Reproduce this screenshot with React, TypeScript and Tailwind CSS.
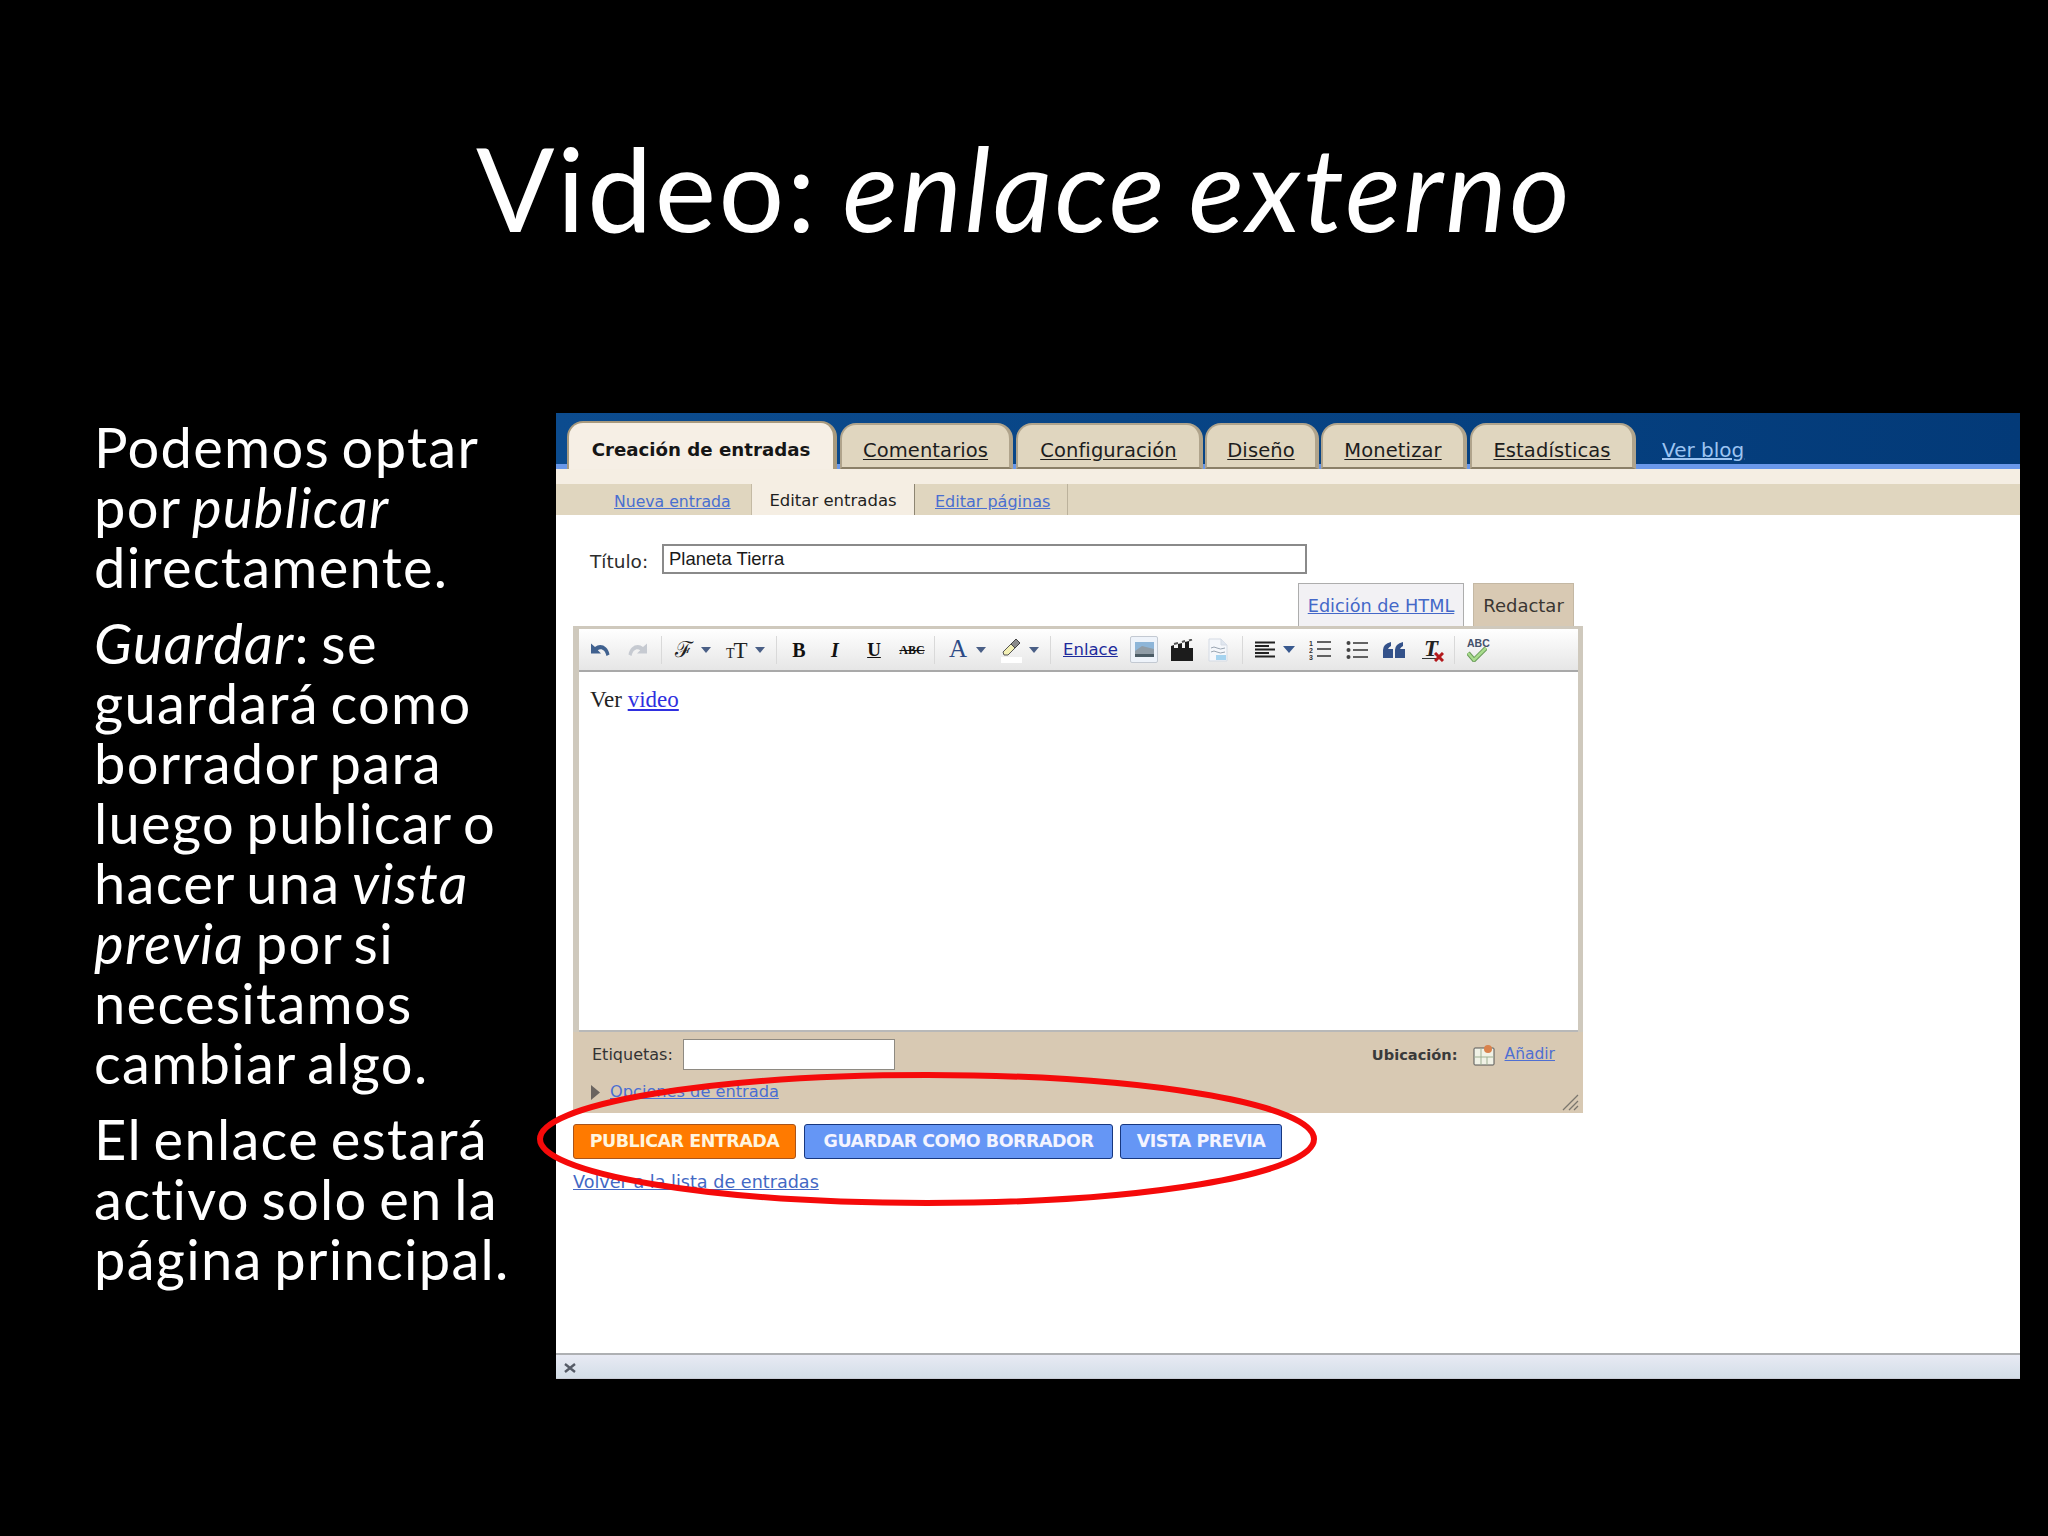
import React from "react";

const ui = "font-['DejaVu_Sans',sans-serif]";

function Tab({ label, active, w, ml }: { label: string; active?: boolean; w: string; ml?: string }) {
  return (
    <div
      className={`${w} ${ml ?? ""} -mb-[5px] rounded-t-[16px] border-t-[2px] border-l-[2px] border-r-[4px] flex items-center justify-center pt-[9px] ${
        active
          ? "h-[48px] bg-[#f6efe5] border-[#a89a7e] border-b-0"
          : "h-[46px] bg-[#e0d6bf] border-[#b0a48c] border-b-[2px] border-b-[#8b8068]"
      }`}
    >
      <span className={`leading-none ${active ? "text-[18.2px] font-bold text-[#161616]" : "text-[19.5px] tracking-[0.1px] underline text-[#1d1d1d] underline-offset-[2px]"}`}>
        {label}
      </span>
    </div>
  );
}

function Caret() {
  return (
    <svg width="10" height="6" viewBox="0 0 10 6" className="shrink-0">
      <path d="M0 0h10L5 6z" fill="#4a5f86" />
    </svg>
  );
}

function Sep({ ml }: { ml: string }) {
  return <div className={`${ml} w-[1px] h-[28px] bg-[#d9d9d9] shrink-0`} />;
}

function Toolbar() {
  return (
    <div className="h-[43px] bg-gradient-to-b from-white to-[#e6e6e6] border-b-[2px] border-[#a9a9a9] flex items-center pl-[11px] shrink-0">
      <svg width="20" height="16" viewBox="0 0 20 16" className="shrink-0">
        <path d="M1 1.500v10h10L7.800 8.300C10.500 6 15 7 16.500 14l3-1.500C18 3.500 10 .5 5 5L1 1.500z" fill="#40618f" />
      </svg>
      <svg width="20" height="16" viewBox="0 0 20 16" className="ml-[18px] shrink-0">
        <path d="M19 1.500v10H9l3.200-3.200C9.500 6 5 7 3.500 14l-3-1.500C2 3.500 10 .5 15 5l4-3.500z" fill="#c6cad1" />
      </svg>
      <Sep ml="ml-[13px]" />
      <span className="ml-[14px] w-[16px] flex justify-center font-['DejaVu_Serif',serif] text-[22px] leading-none text-[#222] shrink-0">ℱ</span>
      <div className="ml-[9px]"><Caret /></div>
      <span className="ml-[15px] w-[22px] font-['Liberation_Serif',serif] leading-none text-[#222] flex items-end shrink-0">
        <span className="text-[14px]">T</span>
        <span className="text-[23px] -ml-[1px] -mb-[1px]">T</span>
      </span>
      <div className="ml-[7px]"><Caret /></div>
      <Sep ml="ml-[11px]" />
      <span className="ml-[15px] w-[14px] flex justify-center font-['Liberation_Serif',serif] font-bold text-[20px] leading-none text-[#111] shrink-0">B</span>
      <span className="ml-[21px] w-[16px] flex justify-center font-['Liberation_Serif',serif] font-bold italic text-[20px] leading-none text-[#111] shrink-0">I</span>
      <span className="ml-[24px] w-[14px] flex justify-center font-['Liberation_Serif',serif] font-bold underline text-[19px] leading-none text-[#111] shrink-0">U</span>
      <span className="ml-[21px] w-[20px] flex justify-center font-['Liberation_Serif',serif] font-bold line-through text-[12px] leading-none text-[#111] shrink-0">ABC</span>
      <Sep ml="ml-[12px]" />
      <span className="ml-[14px] w-[18px] flex justify-center font-['Liberation_Serif',serif] text-[25px] leading-none text-[#2c4a85] -mt-[3px] shrink-0">A</span>
      <div className="ml-[9px]"><Caret /></div>
      <svg width="24" height="26" viewBox="0 0 24 26" className="ml-[14px] shrink-0">
        <path d="M3 15l8-8 4 4-7 7H4z" fill="#f3f0b5" stroke="#555" strokeWidth="1" />
        <path d="M11 7l5-5 4 4-5 5z" fill="#8a8a8a" stroke="#444" strokeWidth="1" />
        <rect x="1" y="20" width="21" height="6" fill="#ffffff" />
      </svg>
      <div className="ml-[5px]"><Caret /></div>
      <Sep ml="ml-[11px]" />
      <span className="ml-[12px] w-[55px] text-[16.5px] leading-none underline text-[#1d2a9c] shrink-0 whitespace-nowrap font-medium pt-[2px]">Enlace</span>
      <div className="ml-[12px] w-[28px] h-[27px] bg-[#eef3fa] border-[1px] border-[#c3c9d2] rounded-[2px] flex items-center justify-center shrink-0">
        <svg width="19" height="15" viewBox="0 0 19 15">
          <rect width="19" height="15" fill="#8db5d8" />
          <path d="M0 9l7-5 12 3v5H0z" fill="#909ca6" />
          <rect y="12" width="19" height="3" fill="#4c5c66" />
        </svg>
      </div>
      <svg width="24" height="22" viewBox="0 0 24 22" className="ml-[12px] shrink-0">
        <rect x="1" y="9" width="22" height="13" fill="#1c1c1c" />
        <path d="M1 7l3-1v3H1zM8 5l4-1v5H8zM15 3l4-1v7h-4z" fill="#1c1c1c" />
        <path d="M4 5l4-1M12 3l3-1M19 1.500l3-1" stroke="#555" strokeWidth="2" />
      </svg>
      <svg width="20" height="24" viewBox="0 0 20 24" className="ml-[14px] shrink-0">
        <path d="M1 1h12l6 6v16H1z" fill="#f4f7fb" stroke="#d5dbe4" />
        <path d="M13 1v6h6" fill="#dfe6ef" stroke="#d5dbe4" />
        <path d="M3 10q3-2 6 0t8 0M3 14q3-2 6 0t8 0" fill="none" stroke="#9aa5b2" />
        <rect x="8" y="17" width="10" height="5" fill="#a5d3ef" />
      </svg>
      <Sep ml="ml-[14px]" />
      <svg width="22" height="18" viewBox="0 0 22 18" className="ml-[12px] shrink-0">
        <path d="M0 1.500h20M0 5h14M0 8.500h20M0 12h14M0 15.500h20" stroke="#222" strokeWidth="1.800" />
      </svg>
      <div className="ml-[6px]"><svg width="12" height="7" viewBox="0 0 12 7"><path d="M0 0h12L6 7z" fill="#39598f" /></svg></div>
      <svg width="22" height="21" viewBox="0 0 22 21" className="ml-[14px] shrink-0">
        <path d="M8 3h14M8 10h14M8 17h14" stroke="#333" strokeWidth="1.600" />
        <text x="0" y="7" fontSize="7" fontFamily="Liberation Sans" fontWeight="700" fill="#333">1</text>
        <text x="0" y="14" fontSize="7" fontFamily="Liberation Sans" fontWeight="700" fill="#333">2</text>
        <text x="0" y="21" fontSize="7" fontFamily="Liberation Sans" fontWeight="700" fill="#333">3</text>
      </svg>
      <svg width="22" height="20" viewBox="0 0 22 20" className="ml-[15px] shrink-0">
        <path d="M7 3h15M7 10h15M7 17h15" stroke="#333" strokeWidth="1.600" />
        <circle cx="2.500" cy="3" r="2" fill="#444" />
        <circle cx="2.500" cy="10" r="2" fill="#444" />
        <circle cx="2.500" cy="17" r="2" fill="#444" />
      </svg>
      <svg width="22" height="16" viewBox="0 0 22 16" className="ml-[15px] shrink-0">
        <path d="M0 16V8Q0 2 8 0v4Q6 5 5 7h5v9zM12 16V8q0-6 8-8v4q-2 1-3 3h5v9z" fill="#34528a" />
      </svg>
      <span className="ml-[17px] w-[22px] h-[24px] relative shrink-0">
        <span className="absolute left-[2px] -top-[1px] font-['Liberation_Serif',serif] italic font-bold text-[23px] leading-none text-[#222]">T</span>
        <span className="absolute left-0 bottom-[3px] w-[14px] h-[1px] bg-[#333]" />
        <svg width="10" height="10" viewBox="0 0 10 10" className="absolute right-0 bottom-0">
          <path d="M1 1l8 8M9 1l-8 8" stroke="#b3191c" strokeWidth="3" />
        </svg>
      </span>
      <Sep ml="ml-[10px]" />
      <span className="ml-[12px] w-[22px] h-[24px] relative shrink-0">
        <span className="absolute left-0 top-0 font-['Liberation_Sans',sans-serif] font-bold text-[10.500px] leading-none text-[#44506b]">ABC</span>
        <svg width="20" height="16" viewBox="0 0 20 16" className="absolute left-0 bottom-0">
          <path d="M1 7l6 7L19 2" fill="none" stroke="#6a9a5a" strokeWidth="4.500" />
          <path d="M1 7l6 7L19 2" fill="none" stroke="#a8dc8c" strokeWidth="2.500" />
        </svg>
      </span>
    </div>
  );
}

export default function App() {
  return (
    <div className="w-[2048px] h-[1536px] bg-black relative overflow-hidden">
      <div className="h-[413px] pt-[113px] text-center text-white font-['Lato',sans-serif] text-[116px] leading-[150px] tracking-[2.500px] [word-spacing:-8px] whitespace-nowrap">
        Video: <em>enlace externo</em>
      </div>
      <div className="flex">
        <div className="w-[556px] pl-[94px] pt-[4px] text-white font-['Lato',sans-serif] text-[56px] leading-[60px] tracking-[1.300px] [word-spacing:-4px] flex flex-col gap-[16px]">
          <p>Podemos optar<br />por <em>publicar</em><br />directamente.</p>
          <p><em>Guardar</em>: se<br />guardará como<br />borrador para<br />luego publicar o<br />hacer una <em>vista</em><br /><em>previa</em> por si<br />necesitamos<br />cambiar algo.</p>
          <p>El enlace estará<br />activo solo en la<br />página principal.</p>
        </div>
        <div className={`w-[1464px] h-[966px] bg-white flex flex-col ${ui}`}>
          <div className="h-[56px] shrink-0 bg-gradient-to-r from-[#0c4c8f] to-[#033a78] border-b-[5px] border-[#6a98ea] flex items-end pl-[11px]">
            <Tab label="Creación de entradas" active w="w-[270px]" />
            <Tab label="Comentarios" w="w-[173px]" ml="ml-[3px]" />
            <Tab label="Configuración" w="w-[187px]" ml="ml-[3px]" />
            <Tab label="Diseño" w="w-[114px]" ml="ml-[2px]" />
            <Tab label="Monetizar" w="w-[146px]" ml="ml-[2px]" />
            <Tab label="Estadísticas" w="w-[166px]" ml="ml-[3px]" />
            <span className="ml-[26px] text-[20px] leading-none underline text-[#9cc4f2] mb-[4px]">Ver blog</span>
          </div>
          <div className="h-[15px] bg-[#f5eee3] shrink-0" />
          <div className="h-[31px] bg-[#e0d6bf] flex items-stretch text-[16px] shrink-0">
            <span className="ml-[58px] w-[137px] flex items-center underline text-[#4a6fd0] text-[15.700px] pt-[4px]">Nueva entrada</span>
            <span className="w-[164px] bg-[#f5eee3] border-r-[1px] border-[#8d8572] border-l-[1px] border-l-[#c4baa4] flex items-center justify-center text-[#1f1f1f] text-[16.500px] pt-[4px]">Editar entradas</span>
            <span className="w-[153px] border-r-[1px] border-[#bcb29c] flex items-center pl-[20px] underline text-[#4a6fd0] pt-[4px]">Editar páginas</span>
          </div>
          <div className="mt-[29px] ml-[34px] h-[30px] flex items-center shrink-0">
            <span className="w-[72px] text-[18.500px] text-[#2c2c2c] pt-[5px]">Título:</span>
            <div className="w-[645px] h-[30px] border-[2px] border-[#8a8a8a] bg-white pl-[5px] font-['Liberation_Sans',sans-serif] text-[18.500px] leading-[26px] text-[#1a1a1a]">Planeta Tierra</div>
          </div>
          <div className="mt-[9px] ml-[17px] w-[1010px] pr-[9px] h-[43px] flex justify-end items-stretch text-[17.700px] shrink-0">
            <span className="w-[166px] bg-[#f2f1f4] border-[1px] border-b-0 border-[#adadad] flex items-center justify-center underline text-[#4468c8] pt-[2px]">Edición de HTML</span>
            <span className="ml-[9px] w-[101px] bg-[#d8c9b3] border-[1px] border-b-0 border-[#c4b8a4] flex items-center justify-center text-[#3a3632] text-[18px]">Redactar</span>
          </div>
          <div className="ml-[17px] w-[1010px] h-[487px] bg-[#d8c9b3] relative flex flex-col shrink-0">
            <div className="h-[406px] border-t-[3px] border-l-[6px] border-r-[5px] border-[#cfc9bd] flex flex-col shrink-0">
              <Toolbar />
              <div className="flex-1 bg-white border-b-[2px] border-[#b8b8b8] pl-[11px] pt-[15px] font-['Liberation_Serif',serif] text-[23px] leading-[26px] text-[#222]">
                Ver <span className="underline text-[#2f2fe0]">video</span>
              </div>
            </div>
            <div className="mt-[7px] pl-[19px] pr-[28px] h-[31px] flex items-center text-[15.500px] shrink-0">
              <span className="w-[91px] text-[#333] text-[16px] font-medium">Etiquetas:</span>
              <div className="w-[212px] h-[31px] bg-white border-[1px] border-[#8e8a82]" />
              <span className="ml-auto font-bold text-[#3a3a3a] text-[14.600px]">Ubicación:</span>
              <svg width="22" height="22" viewBox="0 0 22 22" className="ml-[15px]">
                <rect x="1" y="4" width="20" height="17" rx="1" fill="#f1f2e6" stroke="#555" />
                <path d="M1 13h20M8 4v17M14 13v8" stroke="#9fb093" />
                <circle cx="15" cy="5" r="4" fill="#d9824c" />
              </svg>
              <span className="ml-[10px] underline text-[#4f6fd2]">Añadir</span>
            </div>
            <div className="mt-[10px] pl-[18px] h-[24px] flex items-center text-[16.200px] shrink-0">
              <svg width="9" height="15" viewBox="0 0 9 15"><path d="M0 0l9 7.500L0 15z" fill="#6a6460" /></svg>
              <span className="ml-[10px] underline text-[#4a6ed2]">Opciones de entrada</span>
            </div>
            <svg width="18" height="18" viewBox="0 0 18 18" className="absolute right-[4px] bottom-[2px]">
              <path d="M2 17L17 2M8 17L17 8M13 17l4-4" stroke="#7b766e" strokeWidth="1.300" />
            </svg>
          </div>
          <div className="mt-[11px] ml-[17px] flex h-[35px] text-[17.500px] font-bold text-[#f4f4ff] shrink-0">
            <span className="w-[223px] bg-[#ff7a00] border-[1px] border-[#a9541a] rounded-[3px] flex items-center justify-center text-[#fff5df] tracking-[-0.5px]">PUBLICAR ENTRADA</span>
            <span className="ml-[8px] w-[309px] bg-[#6596f5] border-[1px] border-[#17377f] rounded-[3px] flex items-center justify-center tracking-[-0.5px]">GUARDAR COMO BORRADOR</span>
            <span className="ml-[7px] w-[162px] bg-[#6596f5] border-[1px] border-[#17377f] rounded-[3px] flex items-center justify-center tracking-[-0.5px]">VISTA PREVIA</span>
          </div>
          <div className="mt-[11px] ml-[17px] text-[17.600px] leading-[24px] underline text-[#4368c4] shrink-0">Volver a la lista de entradas</div>
          <div className="flex-1" />
          <div className="h-[26px] shrink-0 border-t-[2px] border-[#aeb0b3] border-b-[1px] border-b-[#c9ccd6] bg-gradient-to-b from-[#e8eaf4] to-[#d3dee7] flex items-center pl-[8px] pt-[3px]">
            <svg width="12" height="10" viewBox="0 0 12 10"><path d="M1 1l10 8M11 1L1 9" stroke="#555b66" strokeWidth="2.400" /></svg>
          </div>
        </div>
      </div>
      <svg width="800" height="150" viewBox="0 0 800 150" className="absolute left-[528px] top-[1064px] pointer-events-none">
        <ellipse cx="399" cy="75" rx="387" ry="64" fill="none" stroke="#f50a0a" strokeWidth="6" />
      </svg>
    </div>
  );
}
